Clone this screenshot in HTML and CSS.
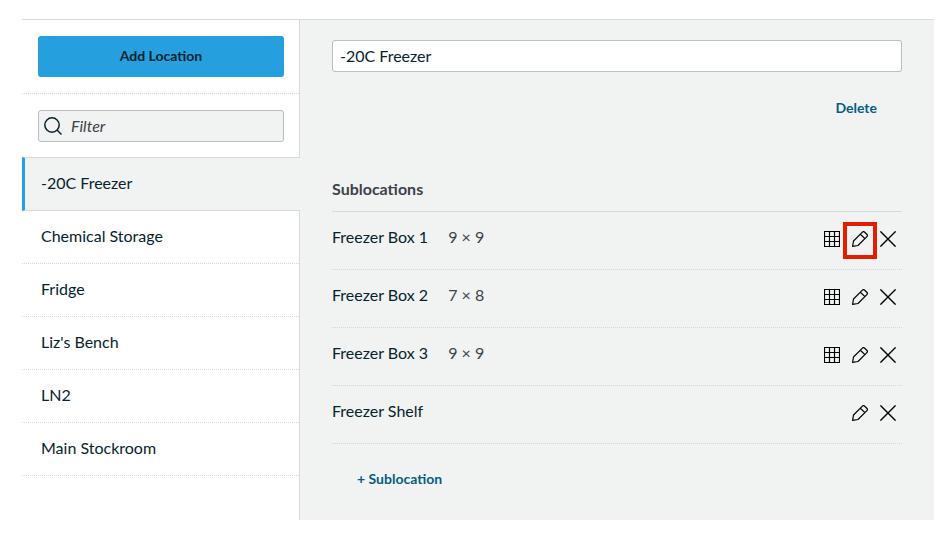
FILE: index.html
```html
<!DOCTYPE html>
<html lang="en">
<head>
  <meta charset="UTF-8" />
  <meta name="viewport" content="width=device-width, initial-scale=1" />
  <title>Locations</title>
  <link rel="stylesheet" href="styles.css">
</head>
<body>
  <!-- Shared icons -->
  <svg class="icon-defs" width="0" height="0" aria-hidden="true">
    <symbol id="icon-grid" viewBox="0 0 16 16">
      <path d="M.5 .5h15v15H.5zM5.5 .5v15M10.5 .5v15M.5 5.5h15M.5 10.5h15" />
    </symbol>
    <symbol id="icon-pencil" viewBox="0 0 16 16">
      <path d="M.6 15.4L1.5 10 10.4 1.1Q11.4 .1 12.5 1L15 3.5Q15.9 4.6 14.9 5.6L6 14.5zM8.4 3.2l4.5 4.4" class="pencil-body" />
    </symbol>
    <symbol id="icon-close" viewBox="0 0 16 16">
      <path d="M.4 .4l15.2 15.2M15.6 .4L.4 15.6" class="close-cross" />
    </symbol>
  </svg>

  <div class="locations">
    <aside class="sidebar">
      <div class="sidebar-actions">
        <button type="button" class="add-button">Add Location</button>
      </div>
      <div class="filter">
        <label class="filter-box" for="filter">
          <svg class="search-icon" viewBox="0 0 18 18" role="img" aria-label="Filter locations">
            <circle cx="8" cy="8" r="7.2" />
            <path d="M13 13l4.5 4.5" />
          </svg>
          <input type="text" id="filter" class="filter-input" placeholder="Filter" />
        </label>
      </div>
      <nav aria-label="Locations">
        <ul class="location-list">
          <li><a href="#freezer" class="location active" aria-current="page">-20C Freezer</a></li>
          <li><a href="#chemical" class="location">Chemical Storage</a></li>
          <li><a href="#fridge" class="location">Fridge</a></li>
          <li><a href="#bench" class="location">Liz's Bench</a></li>
          <li><a href="#ln2" class="location">LN2</a></li>
          <li><a href="#stockroom" class="location">Main Stockroom</a></li>
        </ul>
      </nav>
    </aside>

    <main class="detail">
      <input type="text" class="name-input" aria-label="Location name" value="-20C Freezer" />
      <div class="detail-actions">
        <button type="button" class="text-button">Delete</button>
      </div>

      <h2>Sublocations</h2>
      <ul class="sublocations">
        <li class="sublocation">
          <span class="name">Freezer Box 1</span>
          <span class="size">9 × 9</span>
          <div class="tools">
            <button type="button" class="icon-button" aria-label="View grid"><svg><use href="#icon-grid" /></svg></button>
            <button type="button" class="icon-button highlighted" aria-label="Edit"><svg><use href="#icon-pencil" /></svg></button>
            <button type="button" class="icon-button" aria-label="Remove"><svg><use href="#icon-close" /></svg></button>
          </div>
        </li>
        <li class="sublocation">
          <span class="name">Freezer Box 2</span>
          <span class="size">7 × 8</span>
          <div class="tools">
            <button type="button" class="icon-button" aria-label="View grid"><svg><use href="#icon-grid" /></svg></button>
            <button type="button" class="icon-button" aria-label="Edit"><svg><use href="#icon-pencil" /></svg></button>
            <button type="button" class="icon-button" aria-label="Remove"><svg><use href="#icon-close" /></svg></button>
          </div>
        </li>
        <li class="sublocation">
          <span class="name">Freezer Box 3</span>
          <span class="size">9 × 9</span>
          <div class="tools">
            <button type="button" class="icon-button" aria-label="View grid"><svg><use href="#icon-grid" /></svg></button>
            <button type="button" class="icon-button" aria-label="Edit"><svg><use href="#icon-pencil" /></svg></button>
            <button type="button" class="icon-button" aria-label="Remove"><svg><use href="#icon-close" /></svg></button>
          </div>
        </li>
        <li class="sublocation">
          <span class="name">Freezer Shelf</span>
          <div class="tools">
            <button type="button" class="icon-button" aria-label="Edit"><svg><use href="#icon-pencil" /></svg></button>
            <button type="button" class="icon-button" aria-label="Remove"><svg><use href="#icon-close" /></svg></button>
          </div>
        </li>
      </ul>
      <div class="add-sublocation">
        <button type="button" class="text-button">+ Sublocation</button>
      </div>
    </main>
  </div>
</body>
</html>
```

FILE: styles.css
```css
* {
  box-sizing: border-box;
}

body {
  margin: 0;
  padding: 19px 7px 14px 22px;
  background-color: #fff;
  color: #06232d;
  font-family: Lato, sans-serif;
  font-size: 16px;
  line-height: 20px;
}

button, input {
  font: inherit;
  color: inherit;
}

button {
  border: none;
  cursor: pointer;
}

ul {
  list-style: none;
  margin: 0;
  padding: 0;
}

.icon-defs {
  display: block;
}

.locations {
  display: grid;
  grid-template-columns: minmax(200px, 278px) 1fr;
  border-top: 1px solid #d8dbdd;
}

/* Sidebar */
.sidebar {
  border-right: 1px solid #d5dadd;
}

.sidebar-actions {
  padding: 16px 15px 16px 16px;
  border-bottom: 1px dotted #d5d8da;
}

.add-button {
  display: block;
  width: 100%;
  padding: 10px 16px 11px;
  border-radius: 3px;
  background-color: #269fde;
  font-size: 14px;
  font-weight: 700;
}

.filter {
  padding: 16px 15px 15px 16px;
}

.filter-box {
  display: flex;
  align-items: center;
  gap: 9px;
  height: 32px;
  padding: 0 5px;
  border: 1px solid #b7bec4;
  border-radius: 3px;
  background-color: #f1f3f3;
}

.search-icon {
  flex: none;
  width: 18px;
  height: 18px;
  fill: none;
  stroke: #06232d;
  stroke-width: 1.5;
}

.filter-input {
  flex: 1;
  min-width: 0;
  padding: 0;
  border: none;
  background: transparent;
}

.filter-input::placeholder {
  color: #3c4248;
  font-style: italic;
  opacity: 1;
}

.location {
  display: block;
  padding: 15px 19px 17px;
  border-bottom: 1px dotted #d5d8da;
  color: inherit;
  text-decoration: none;
}

/* Covers the sidebar border so it joins the detail panel */
.location.active {
  margin-right: -1px;
  padding-left: 16px;
  border-top: 1px solid #d5dadd;
  border-bottom: 1px solid #d5dadd;
  border-left: 3px solid #269fde;
  background-color: #f1f3f3;
}

/* Detail panel */
.detail {
  padding: 20px 32px 31px;
  background-color: #f1f3f3;
}

.name-input {
  display: block;
  width: 100%;
  height: 32px;
  padding: 0 7px 1px;
  border: 1px solid #b7bec4;
  border-radius: 3px;
  background-color: #fff;
}

.detail-actions {
  display: flex;
  justify-content: flex-end;
  padding: 26px 25px 61px;
}

.text-button {
  padding: 0;
  background: none;
  color: #065c82;
  font-size: 14px;
  font-weight: 700;
}

.detail h2 {
  margin: 0;
  padding-bottom: 12px;
  border-bottom: 1px solid #d5dadd;
  color: #3c4248;
  font-size: 16px;
  font-weight: 700;
}

.sublocation {
  display: flex;
  align-items: center;
  gap: 20px;
  padding: 15px 6px 22px 0;
  border-bottom: 1px dotted #d5d8da;
}

.size {
  color: #3c4248;
}

.tools {
  display: flex;
  gap: 12px;
  margin-left: auto;
}

.icon-button {
  position: relative;
  padding: 4px 0 0;
  background: none;
  color: #000;
}

.icon-button svg {
  display: block;
  width: 16px;
  height: 16px;
  fill: none;
  stroke: currentColor;
  stroke-width: 1.2;
}

.pencil-body {
  stroke-linejoin: round;
}

.close-cross {
  stroke-width: 1.4;
}

.highlighted::after {
  content: "";
  position: absolute;
  inset: -5px -9px -12px;
  border: 4px solid #e11f00;
}

.add-sublocation {
  padding: 24px 25px 0;
}
```
